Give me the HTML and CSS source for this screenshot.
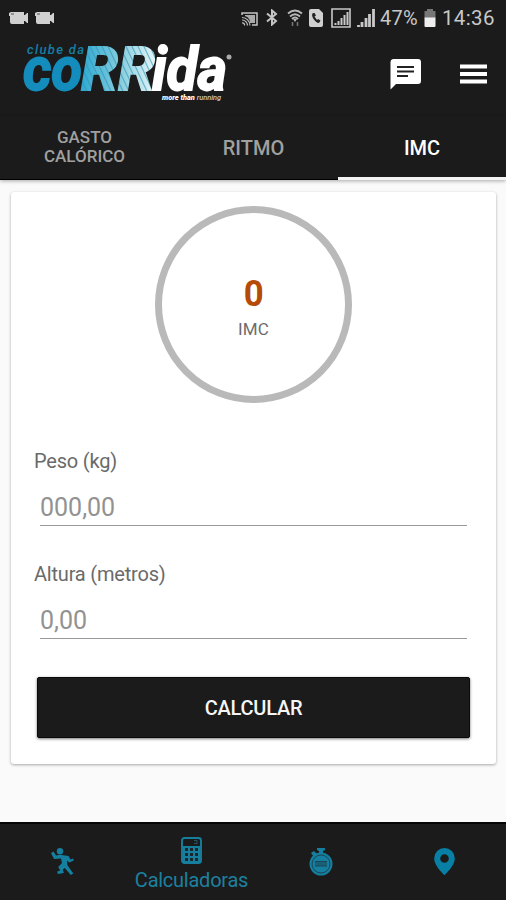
FILE: index.html
```html
<!DOCTYPE html>
<html lang="pt-BR">
<head>
<meta charset="utf-8">
<title>Clube da Corrida</title>
<link rel="stylesheet" href="styles.css">
</head>
<body>
<div class="app">
  <div class="status">
    <svg class="cams" width="48" height="14" viewBox="0 0 48 14" fill="#d0d0d0"><path d="M2 1h13v3h1l2-2h1v10h-1l-2-2h-1v3H3a2 2 0 0 1-2-2V5H0V2zM28 1h13v3h1l2-2h1v10h-1l-2-2h-1v3H29a2 2 0 0 1-2-2V5h-1V2z"/><path d="M2 3h3M28 3h3" stroke="#555"/></svg>
    <svg class="cast" width="17" height="14" viewBox="0 0 17 14" fill="none" stroke="#c4c4c4"><path d="M1 3V1h15v12h-5" stroke-width="1.5"/><path d="M4 3h10v8H9C9 7 7 5 4 4z" fill="#aaa" stroke="none"/><path d="M1 5.500a8 8 0 0 1 8 8M1 8a5.500 5.500 0 0 1 5.500 5.500M1 11a2 2 0 0 1 2.500 2.500" stroke-width="1.200"/></svg>
    <svg class="bt" width="12" height="17" viewBox="0 0 12 17" fill="none" stroke="#c4c4c4" stroke-width="2"><path d="M1 4.500l9 7.500-4 3.500V1.500l4 3.500-9 7.500"/></svg>
    <svg class="wifi" width="16" height="18" viewBox="0 0 16 18" fill="none" stroke="#b8b8b8"><path d="M1 4.500Q8-1.500 15 4.500M3 7.500q5-4.500 10 0M5 10q3-3 6 0" stroke-width="1.900"/><path d="M6 10h4l-2 3z" fill="#b8b8b8" stroke="none"/><path d="M5.500 13v4M10.500 13v4" stroke="#777" stroke-width="1.500"/></svg>
    <svg class="sim" width="14" height="18" viewBox="0 0 14 18"><path d="M2 0h8l4 4v12a2 2 0 0 1-2 2H2a2 2 0 0 1-2-2V2a2 2 0 0 1 2-2z" fill="#d0d0d0"/><path d="M4 4c-3 2 2 10 6 10l1.500-2.500-2.500-1.500-1 1-2.500-3.500L7 6.500 5.500 4z" fill="#222"/></svg>
    <svg class="boxed" width="20" height="20" viewBox="0 0 20 20" fill="none" stroke="#c8c8c8"><path d="M1 1h18v18H1z" stroke-width="1.600"/><path d="M4.500 17v-2M7.500 17v-4M10.500 17v-7M13.500 17V7M16.500 17V4" stroke-width="2"/></svg>
    <svg class="signal" width="18" height="18" viewBox="0 0 18 18" stroke="#c8c8c8" stroke-width="2.800"><path d="M1.500 18v-2M5 18v-5M9 18V9M12.500 18V5M16.500 18V0"/></svg>
    <span class="pct">47%</span>
    <svg class="battery" width="12" height="18" viewBox="0 0 12 18"><path d="M3 0h6v2h2.500v7H.5V2H3z" fill="#777"/><path d="M.5 8.500h11V17a1 1 0 0 1-1 1h-9a1 1 0 0 1-1-1z" fill="#eee"/></svg>
    <span class="clock">14:36</span>
  </div>
  <header class="header">
    <svg class="logo" width="216" height="66" viewBox="0 0 216 66">
      <defs>
        <linearGradient id="fade" gradientUnits="userSpaceOnUse" x1="0" y1="0" x2="80" y2="0"><stop offset="0" stop-color="#2aa7d2"/><stop offset=".5" stop-color="#83cbdc"/><stop offset="1" stop-color="#eefafa"/></linearGradient>
        <pattern id="hatch" x="58" y="0" width="80" height="66" patternUnits="userSpaceOnUse">
          <path d="M0 0h80v66H0z" fill="url(#fade)"/>
          <path d="M-22 0l28 60M-16 0l28 60M-10 0l28 60M-4 0l28 60M2 0l28 60M8 0l28 60M14 0l28 60M20 0l28 60M26 0l28 60M32 0l28 60M38 0l28 60M44 0l28 60M50 0l28 60M56 0l28 60M62 0l28 60M68 0l28 60" fill="none" stroke="#2b93b5" stroke-width="1.200" opacity=".6"/>
        </pattern>
      </defs>
      <g class="mark">
        <text x="2" y="50" fill="#148dbd" stroke="#148dbd" textLength="59" lengthAdjust="spacingAndGlyphs">co</text>
        <text x="60" y="50" fill="url(#hatch)" stroke="url(#hatch)" textLength="74" lengthAdjust="spacingAndGlyphs">RR</text>
        <text x="131" y="50" fill="#fff" stroke="#fff" textLength="75" lengthAdjust="spacingAndGlyphs">ida</text>
      </g>
      <text class="club" x="6" y="14" textLength="57">clube da</text>
      <circle cx="208" cy="17" r="2.500" fill="#aaa"/>
      <text class="tag" x="141" y="60" textLength="59" lengthAdjust="spacingAndGlyphs"><tspan class="strong">more than</tspan> running</text>
    </svg>
    <svg class="chat" width="31" height="31" viewBox="0 0 31 31"><path d="M3 0h25a3 3 0 0 1 3 3v19a3 3 0 0 1-3 3H6l-5.500 5.500V3a3 3 0 0 1 2.500-3z" fill="#fff"/><path d="M7 8h17M7 12.500h17M7 17h11" stroke="#222" stroke-width="2.200"/></svg>
    <svg class="menu" width="27" height="20" viewBox="0 0 27 20"><path d="M0 2.500h27M0 10h27M0 17.500h27" stroke="#fff" stroke-width="4"/></svg>
  </header>
  <nav class="tabs">
    <div class="tab small">GASTO<br>CALÓRICO</div>
    <div class="tab">RITMO</div>
    <div class="tab active">IMC</div>
  </nav>
  <main class="content">
    <section class="card">
      <div class="gauge"><div class="value">0</div><div class="unit">IMC</div></div>
      <label class="label" for="peso">Peso (kg)</label>
      <input class="field" id="peso" placeholder="000,00">
      <label class="label second" for="altura">Altura (metros)</label>
      <input class="field" id="altura" placeholder="0,00">
      <button class="button">CALCULAR</button>
    </section>
  </main>
  <footer class="bottom">
    <div class="item">
      <svg width="25" height="28" viewBox="0 0 25 28" fill="#157f9f"><circle cx="9" cy="3.200" r="3.200"/><path d="M0 5l2.500-1.500L5 7.500l4-.8L17.500 8l2 3.500 2.500-1 .8 2-4.500 2-2.300-2 .3 4.500 6 8.500-2.500 1.500-6-7-2 1.500 1 3.500-6 1-.6-2.500 3-1-2-3.500L11 15l-1-4.500-7 .5z"/></svg>
    </div>
    <div class="item selected">
      <svg width="21" height="27" viewBox="0 0 21 27"><rect x="1" y="1" width="19" height="25" rx="2.500" fill="none" stroke="#177f9e" stroke-width="1.900"/><path d="M2 9h17v16H2z" fill="#177f9e"/><path d="M4 11h3v3H4zM9 11h3v3H9zM14 11h3v3h-3zM4 16h3v3H4zM9 16h3v3H9zM14 16h3v3h-3zM4 21h3v3H4zM9 21h3v3H9zM14 21h3v3h-3z" fill="#1b272b"/><path d="M13 3.500h3v3h-3" fill="none" stroke="#245566"/></svg>
      <span class="caption">Calculadoras</span>
    </div>
    <div class="item">
      <svg width="24" height="28" viewBox="0 0 24 28"><path d="M8 0h8v2l-2 1v3h-4V3L8 2zM2 5l3-2 3 3-3 3z" fill="#157f9f"/><circle cx="12" cy="16" r="10.500" fill="#157f9f" stroke="#157f9f" stroke-width="2"/><circle cx="12" cy="16" r="9" fill="none" stroke="#1c4654"/><path d="M6 13.500h12v4.500H6z" fill="#176078"/><path d="M6 13.500h12M6 18h12" stroke="#1c4654"/></svg>
    </div>
    <div class="item">
      <svg width="21" height="27" viewBox="0 0 21 27"><path d="M10.500 0A10.300 10.300 0 0 0 .2 10.400C.2 18 10.500 27 10.500 27S20.800 18 20.800 10.400A10.300 10.300 0 0 0 10.500 0zm0 6.200a4.300 4.300 0 1 1 0 8.600 4.300 4.300 0 0 1 0-8.600z" fill="#087fa4"/></svg>
    </div>
  </footer>
</div>
</body>
</html>
```

FILE: styles.css
```css
* { box-sizing: border-box; }
body { margin: 0; font-family: Roboto, "Liberation Sans", sans-serif; }
.app { width: 506px; height: 900px; display: flex; flex-direction: column; overflow: hidden; background: #fafafa; }
svg { display: block; flex: none; }

.status { height: 38px; display: flex; align-items: center; padding-left: 9px; background: #1b1b1b; color: #c8c8c8; font-size: 20px; }
.status span { white-space: nowrap; line-height: 24px; }
.cams { margin-top: -3px; }
.cast { margin-left: 184px; margin-top: -1px; }
.bt { margin-left: 8px; margin-top: -3px; }
.wifi { margin-left: 9px; margin-top: -3px; }
.sim { margin-left: 6px; margin-top: -3px; }
.boxed { margin-left: 8px; margin-top: -3px; }
.signal { margin-left: 6px; margin-top: -2px; }
.pct { width: 43px; margin-left: 5px; margin-top: -2px; letter-spacing: .2px; }
.battery { margin-left: 1px; margin-top: -2px; }
.clock { margin-left: 6px; margin-top: -2px; font-size: 20.500px; letter-spacing: .35px; }

.header { height: 78px; display: flex; align-items: flex-start; padding-left: 21px; background: #1b1b1b; }
.logo { margin-top: 2px; overflow: visible; }
.mark { font: italic 700 61px Roboto, sans-serif; stroke-width: 1.800px; }
.club { font: italic 500 13px Roboto, sans-serif; fill: #147fa5; }
.tag { font: italic 500 8px Roboto, sans-serif; fill: #ccc; }
.strong { font-weight: 900; fill: #fff; }
.chat { margin: 21px 0 0 153px; }
.menu { margin: 26px 0 0 39px; }

.tabs { height: 64px; display: grid; grid-template-columns: 169px 169px 168px; background: #1b1b1b; border-bottom: 1px solid #000; box-shadow: 0 1px 4px #0005; position: relative; }
.tab { display: flex; align-items: center; justify-content: center; text-align: center; color: #a0a0a0; font-weight: 500; font-size: 20px; }
.small { font-size: 17px; line-height: 19px; padding-bottom: 1px; }
.active { color: #fff; border-bottom: 3px solid #f4f4f4; padding-top: 3px; margin-bottom: -1px; }

.content { flex: 1; padding: 12px 10px 0 11px; }
.card { height: 572px; background: #fff; border-radius: 3px; box-shadow: 0 1px 3px #0005; display: flex; flex-direction: column; padding: 14px 26px 0 24px; }
.gauge { width: 197px; height: 197px; border: 7px solid #b9b9b9; border-radius: 50%; align-self: center; margin-left: 2px; display: flex; flex-direction: column; align-items: center; padding-top: 59px; }
.value { color: #b64b05; font-size: 37px; line-height: 44px; font-weight: 700; transform: scaleX(.94); }
.unit { color: #6c6c6c; font-size: 17px; line-height: 22px; margin-top: 2px; letter-spacing: .2px; }
.label { color: #6a6a6a; font-size: 20px; line-height: 24px; margin-top: 46px; margin-left: -1px; letter-spacing: -.2px; }
.field { height: 44px; margin: 9px 3px 0 5px; padding: 7px 0 0; border: 0; border-bottom: 1px solid #999; border-radius: 0; outline: 0; font: 400 25px Roboto, sans-serif; background: transparent; color: #555; }
.field::placeholder { color: #929292; opacity: 1; }
.second { margin-top: 36px; }
.button { height: 61px; margin: 38px 0 0 2px; border: 1px solid #090909; border-radius: 2px; background: #1b1b1b; color: #f5f5f5; font: 500 20px Roboto, sans-serif; letter-spacing: -.25px; box-shadow: 0 1px 3px #0008; padding: 0; }

.bottom { height: 78px; display: grid; grid-template-columns: 127px 129px 129px 119px; background: #1b1b1b; border-top: 2px solid #050505; }
.item { display: flex; flex-direction: column; align-items: center; padding-top: 24px; }
.selected { padding-top: 13px; }
.caption { color: #1c81a0; font-size: 20px; line-height: 24px; margin-top: 4px; letter-spacing: -.25px; }
```
